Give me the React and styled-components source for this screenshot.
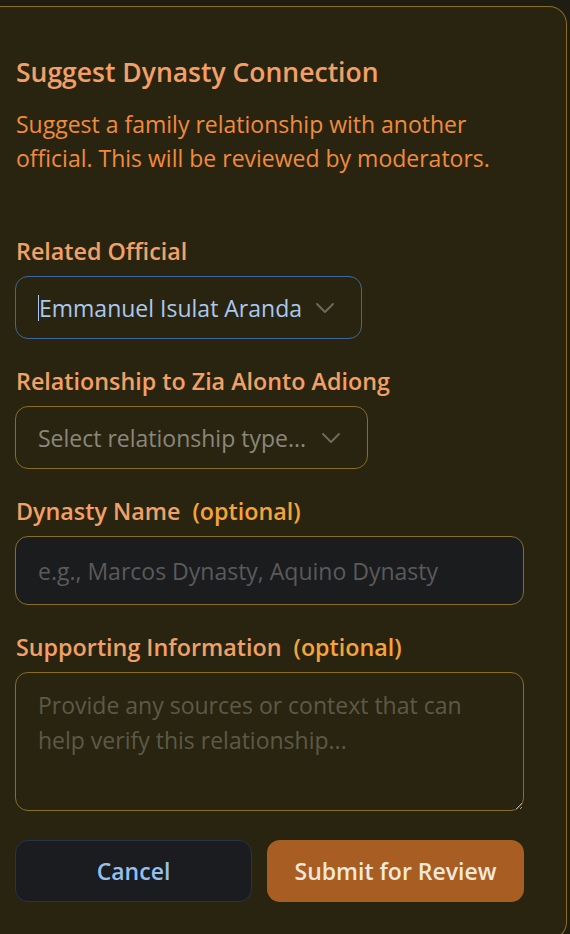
import React from "react";
import styled, { createGlobalStyle } from "styled-components";
import { ChevronDown } from "lucide-react";

const GlobalStyle = createGlobalStyle`
  html, body {
    margin: 0;
    padding: 0;
    background: #1f1d12;
    font-family: "Open Sans", "Noto Sans", sans-serif;
  }
  * { box-sizing: border-box; }
`;

const App = () => {
  return (
    <Page>
      <GlobalStyle />
      <Card>
        <Header>
          <Title>Suggest Dynasty Connection</Title>
          <Description>
            Suggest a family relationship with another official. This will be
            reviewed by moderators.
          </Description>
        </Header>

        <Form>
          <Field>
            <Label>Related Official</Label>
            <SelectBox $width="347px" $focused>
              <SelectValue $filled>
                <Caret />
                Emmanuel Isulat Aranda
              </SelectValue>
              <ChevronDown size={32} strokeWidth={1.4} color="#6e6a5c" />
            </SelectBox>
          </Field>

          <Field>
            <Label>Relationship to Zia Alonto Adiong</Label>
            <SelectBox $width="353px">
              <SelectValue>Select relationship type...</SelectValue>
              <ChevronDown size={32} strokeWidth={1.4} color="#6e6a5c" />
            </SelectBox>
          </Field>

          <Field>
            <Label>
              Dynasty Name <Optional>(optional)</Optional>
            </Label>
            <TextInput placeholder="e.g., Marcos Dynasty, Aquino Dynasty" />
          </Field>

          <Field>
            <Label>
              Supporting Information <Optional>(optional)</Optional>
            </Label>
            <TextArea placeholder="Provide any sources or context that can help verify this relationship..." />
          </Field>

          <Actions>
            <CancelBtn>Cancel</CancelBtn>
            <SubmitBtn>Submit for Review</SubmitBtn>
          </Actions>
        </Form>
      </Card>
    </Page>
  );
};

export default App;

const Page = styled.div`
  width: 570px;
  height: 934px;
  overflow: hidden;
  padding-top: 6px;
`;

const Card = styled.div`
  width: 567px;
  height: 934px;
  background: #29240f;
  border: 1px solid #8a6d1f;
  border-left: none;
  border-radius: 0 18px 18px 0;
  padding: 48px 44px 0 15px;
`;

const Header = styled.div`
  display: flex;
  flex-direction: column;
  gap: 18px;
  padding-left: 1px;
`;

const Title = styled.h2`
  margin: 0;
  font-size: 26.5px;
  font-weight: 600;
  line-height: 34px;
  color: #f2a066;
`;

const Description = styled.p`
  margin: 0;
  font-size: 23px;
  line-height: 34px;
  color: #f28b3c;
  max-width: 510px;
`;

const Form = styled.div`
  display: flex;
  flex-direction: column;
  gap: 27px;
  margin-top: 61px;
`;

const Field = styled.div`
  display: flex;
  flex-direction: column;
  gap: 10px;
`;

const Label = styled.label`
  font-size: 23.3px;
  font-weight: 600;
  line-height: 30px;
  color: #f2a066;
  padding-left: 1px;
  white-space: pre;
`;

const Optional = styled.span`
  color: #f6a43a;
  margin-left: 6px;
`;

const SelectBox = styled.div`
  width: ${(p) => p.$width};
  height: 63px;
  display: flex;
  align-items: center;
  justify-content: space-between;
  padding: 0 20px 0 22px;
  border: 1px solid ${(p) => (p.$focused ? "#3e679f" : "#8a6d1f")};
  border-radius: 13px;
  background: transparent;
`;

const SelectValue = styled.span`
  display: flex;
  align-items: center;
  font-size: 23px;
  white-space: nowrap;
  color: ${(p) => (p.$filled ? "#a9c9ee" : "#8a877c")};
`;

const Caret = styled.span`
  display: inline-block;
  width: 1px;
  height: 26px;
  background: #a9c9ee;
`;

const TextInput = styled.input`
  width: 509px;
  height: 69px;
  padding: 0 22px;
  background: #1b1c1e;
  border: 1px solid #8a6d1f;
  border-radius: 13px;
  font-family: inherit;
  font-size: 23px;
  color: #d0d0d0;
  outline: none;
  &::placeholder {
    color: #5a5a5a;
  }
`;

const TextArea = styled.textarea`
  width: 509px;
  height: 139px;
  padding: 15px 22px;
  background: transparent;
  border: 1px solid #8a6d1f;
  border-radius: 13px;
  font-family: inherit;
  font-size: 23px;
  line-height: 35px;
  color: #d0d0d0;
  outline: none;
  resize: vertical;
  &::placeholder {
    color: #5c5947;
  }
`;

const Actions = styled.div`
  display: grid;
  grid-template-columns: 237px 257px;
  gap: 15px;
  margin-top: 2px;
`;

const BaseBtn = styled.button`
  height: 62px;
  border-radius: 13px;
  font-family: inherit;
  font-size: 23px;
  font-weight: 600;
  cursor: pointer;
`;

const CancelBtn = styled(BaseBtn)`
  background: #1b1c1f;
  border: 1px solid #27334a;
  color: #93c0ee;
`;

const SubmitBtn = styled(BaseBtn)`
  background: #a85e22;
  border: none;
  color: #f3e8dc;
`;
